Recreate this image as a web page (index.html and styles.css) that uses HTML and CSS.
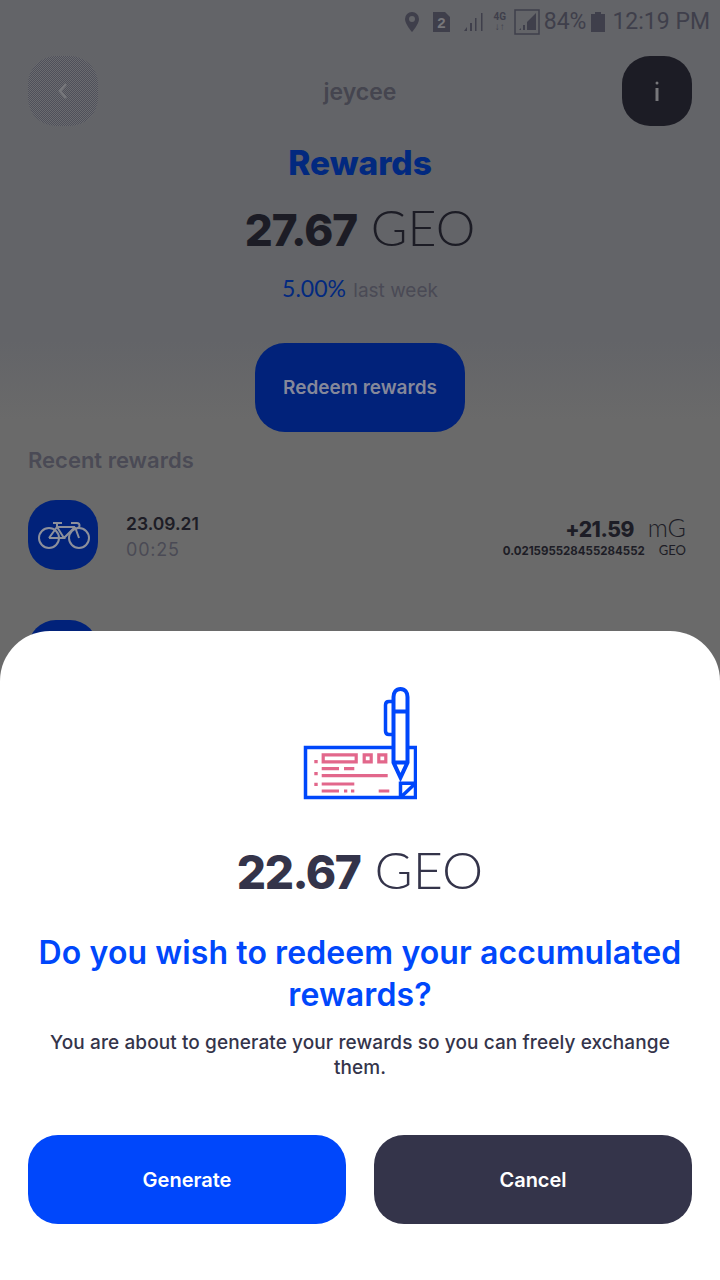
FILE: index.html
```html
<!DOCTYPE html>
<html lang="en">
<head>
    <meta charset="UTF-8">
    <meta name="viewport" content="width=device-width, initial-scale=1.0">
    <title>Rewards</title>
    <link rel="stylesheet" href="styles.css">
</head>
<body>
    <div class="screen">
        <div class="status-bar">
            <svg class="st-pin" width="16" height="22" viewBox="0 0 16 22"><path d="M8 1a7 7 0 0 0-7 7c0 5 7 13 7 13s7-8 7-13a7 7 0 0 0-7-7z" fill="#3f3f4b"/><circle cx="8" cy="8" r="3" fill="#636468"/></svg>
            <svg class="st-sim" width="19" height="22" viewBox="0 0 19 22"><path d="M1 1h12l5 5v15H1z" fill="#3f3f4b"/><text x="9.500" y="17" class="st-sim-num">2</text></svg>
            <svg class="st-bars" width="20" height="22" viewBox="0 0 20 22"><path d="M1 20l3-4v4zM7 20v-8h2v8zM12 20V7h1.500v13zM18 20V2h1.500v18z" fill="#3f3f4b"/></svg>
            <div class="st-4g">4G<span>↓↑</span></div>
            <svg class="st-box" width="26" height="26" viewBox="0 0 26 26"><rect x="1" y="1" width="24" height="24" fill="none" stroke="#3f3f4b" stroke-width="1.500"/><path d="M5 21l2-2v2zM9 21v-5h2v5zM13 21v-8l9-9v17z" fill="#3f3f4b"/></svg>
            <span class="st-text">84%</span>
            <svg class="st-batt" width="14" height="22" viewBox="0 0 14 22"><path d="M4 1h6v2h4v18H0V3h4z" fill="#3f3f4b"/></svg>
            <span class="st-text">12:19 PM</span>
        </div>

        <header class="top-bar">
            <div class="round-btn back-btn">
                <svg width="14" height="20" viewBox="0 0 14 20"><path d="M10 3L4 10l6 7" fill="none" stroke="#76777b" stroke-width="2.500"/></svg>
            </div>
            <div class="user-name">jeycee</div>
            <div class="round-btn info-btn">
                <svg width="6" height="24" viewBox="0 0 6 24"><circle cx="3" cy="4" r="1.500" fill="#77777b"/><rect x="1.500" y="9" width="3" height="13" fill="#77777b"/></svg>
            </div>
        </header>

        <h1 class="page-title">Rewards</h1>
        <div class="balance"><b>27.67</b> GEO</div>
        <div class="weekly"><span class="weekly-pct">5.00%</span> last week</div>
        <div class="redeem-wrap"><div class="redeem-btn">Redeem rewards</div></div>

        <h2 class="recent-title">Recent rewards</h2>
        <div class="reward-row">
            <div class="ride-icon">
                <svg class="bike" width="52" height="30" viewBox="0 0 52 30" fill="none" stroke="#8d909b" stroke-width="2"><circle cx="11" cy="18" r="10"/><circle cx="41" cy="18" r="10"/><path d="M11 18l8-11h18M19 7l7 11H11M37 7l-11 11M37 7l4 11M15 3h9M19 3v4M33 3h6a2 2 0 0 1 0 5"/></svg>
            </div>
            <div class="ride-when">
                <div class="ride-date">23.09.21</div>
                <div class="ride-time">00:25</div>
            </div>
            <div class="ride-amount">
                <div class="amount-main"><b>+21.59</b><span>mG</span></div>
                <div class="amount-sub"><b>0.021595528455284552</b><span>GEO</span></div>
            </div>
        </div>
        <div class="reward-row">
            <div class="ride-icon"></div>
        </div>

        <div class="sheet">
            <svg class="check-icon" width="114" height="113" viewBox="0 0 114 113" fill="none">
                <path d="M106 60.500h6.500v50H2.500v-50H90" stroke="#0047fb" stroke-width="3.500"/>
                <path d="M97.500 110.500V96.200h15M97.500 110.500l15-14.300" stroke="#0047fb" stroke-width="3.500"/>
                <path d="M11.300 73h3.400v3.300h-3.400zM11.300 85h3.400v3.300h-3.400zM11.300 95.700h3.400V99h-3.400z" fill="#e2678b"/>
                <path d="M20.200 67.800h33v7h-33zM61.200 67.800h7v7h-7zM75.800 67.800h7v7h-7z" stroke="#e2678b" stroke-width="3.200"/>
                <path d="M18.700 81.700H36M41 81.700h10.300M18.700 88.700h66M18.700 97h32.600M18.700 104H36M41 104h3.300M48 104h3.300M75.700 104h10.600" stroke="#e2678b" stroke-width="3.200"/>
                <path d="M97.500 2c-4.500 0-7 3.500-7 8v65.500l7 15 7-15V10c0-4.500-2.500-8-7-8zM90.500 24.500h14M90.500 75.500h14" stroke="#0047fb" stroke-width="4" fill="#fff"/>
                <path d="M90 14.500h-4c-2.200 0-3.500 1.300-3.500 3.500v26c0 2.200 1.300 3.500 3.500 3.500h4" stroke="#0047fb" stroke-width="3.500"/>
            </svg>
            <div class="sheet-amount"><b>22.67</b> GEO</div>
            <h3 class="sheet-question">Do you wish to redeem your accumulated rewards?</h3>
            <p class="sheet-text">You are about to generate your rewards so you can freely exchange them.</p>
            <div class="sheet-actions">
                <button class="btn-generate">Generate</button>
                <button class="btn-cancel">Cancel</button>
            </div>
        </div>
    </div>
</body>
</html>
```

FILE: styles.css
```css
* {
    box-sizing: border-box;
}
body {
    margin: 0;
    font-family: Inter, "Liberation Sans", sans-serif;
    background-color: #636468;
}
.screen {
    position: relative;
    width: 720px;
    height: 1280px;
    overflow: hidden;
    background: linear-gradient(#636468 0, #636468 340px, #6a6a6a 420px, #6a6a6a 100%);
    color: #1d1d26;
}
.status-bar {
    height: 40px;
    padding: 3px 10px 0 0;
    display: flex;
    justify-content: flex-end;
    align-items: center;
    color: #3f3f4b;
}
.st-pin {
    margin-right: 12px;
}
.st-sim {
    margin-right: 12px;
}
.st-sim-num {
    font: bold 15px "Liberation Sans", sans-serif;
    fill: #77777b;
    text-anchor: middle;
}
.st-bars {
    margin-right: 9px;
}
.st-4g {
    width: 16px;
    font: bold 10px/10px Roboto, sans-serif;
    text-align: center;
    margin-right: 6px;
}
.st-4g span {
    display: block;
}
.st-box {
    margin-right: 4px;
}
.st-text {
    font: 23px Roboto, sans-serif;
}
.st-batt {
    margin: 0 7px 0 5px;
}
.top-bar {
    display: flex;
    justify-content: space-between;
    align-items: center;
    padding: 16px 28px 0;
}
.round-btn {
    width: 70px;
    height: 70px;
    border-radius: 28px;
    display: flex;
    align-items: center;
    justify-content: center;
}
.back-btn {
    background: repeating-conic-gradient(#4f505a 0 25%, #6b6c70 0 50%) 0 0 / 2px 2px;
}
.info-btn {
    background-color: #1c1c25;
}
.user-name {
    margin-top: 2px;
    font-size: 23px;
    font-weight: 600;
    color: #45454f;
}
.page-title {
    margin: 16px 0 0;
    text-align: center;
    font-size: 33.500px;
    line-height: 42px;
    font-weight: 800;
    color: #02297f;
}
.balance {
    margin-top: 13px;
    height: 60px;
    text-align: center;
    font-family: Lato, sans-serif;
    font-size: 50px;
    line-height: 60px;
    font-weight: 300;
    color: #1c1c25;
}
.balance b, .sheet-amount b, .amount-main b, .amount-sub b {
    font-family: Inter, sans-serif;
    font-weight: 800;
    letter-spacing: -1px;
}
.balance b {
    font-size: 44px;
}
.weekly {
    margin-top: 18px;
    height: 26px;
    text-align: center;
    font-size: 19px;
    line-height: 26px;
    color: #4a4a55;
}
.weekly-pct {
    font-family: Lato, sans-serif;
    font-size: 23px;
    margin-right: 2px;
    color: #02297f;
}
.redeem-wrap {
    margin-top: 42px;
    display: flex;
    justify-content: center;
}
.redeem-btn {
    width: 210px;
    height: 89px;
    border-radius: 30px;
    background-color: #01227a;
    color: #85889a;
    font-size: 19px;
    font-weight: 600;
    display: flex;
    align-items: center;
    justify-content: center;
}
.recent-title {
    margin: 15px 28px 0;
    font-size: 22px;
    line-height: 26px;
    font-weight: 600;
    color: #4a4a55;
}
.reward-row {
    display: flex;
    align-items: center;
    margin: 27px 34px 50px 28px;
    height: 70px;
}
.ride-icon {
    width: 70px;
    height: 70px;
    border-radius: 28px;
    background-color: #01227a;
    display: flex;
    align-items: center;
    justify-content: center;
}
.bike {
    margin-left: 2px;
}
.ride-when {
    margin-left: 28px;
    padding-top: 4px;
}
.ride-date {
    font-size: 17.500px;
    line-height: 26px;
    font-weight: 600;
}
.ride-time {
    font-size: 18px;
    line-height: 26px;
    letter-spacing: 0.800px;
    color: #4a4a55;
}
.ride-amount {
    margin-left: auto;
    text-align: right;
}
.amount-main {
    height: 30px;
    font-family: Lato, sans-serif;
    font-size: 25px;
    line-height: 30px;
}
.amount-main b {
    font-size: 21px;
    letter-spacing: -0.500px;
}
.amount-main span {
    margin-left: 14px;
    font-weight: 300;
}
.amount-sub {
    height: 16px;
    font-family: Lato, sans-serif;
    font-size: 13px;
    line-height: 16px;
}
.amount-sub b {
    font-size: 11.500px;
    font-weight: 700;
    letter-spacing: 0;
}
.amount-sub span {
    margin-left: 14px;
    font-weight: 400;
}
.sheet {
    position: absolute;
    left: 0;
    right: 0;
    top: 631px;
    bottom: 0;
    padding: 56px 28px 0;
    background-color: #fff;
    border-radius: 50px 50px 0 0;
    text-align: center;
    color: #34344a;
}
.check-icon {
    display: block;
    margin: 0 auto;
}
.sheet-amount {
    margin-top: 39px;
    height: 60px;
    font-family: Lato, sans-serif;
    font-size: 52px;
    line-height: 60px;
    font-weight: 300;
}
.sheet-amount b {
    font-size: 46px;
    letter-spacing: -1.500px;
}
.sheet-question {
    margin: 33px 0 0;
    font-size: 32px;
    line-height: 42px;
    font-weight: 600;
    letter-spacing: 0.100px;
    color: #0047fb;
}
.sheet-text {
    margin: 14px 20px 0;
    font-size: 19px;
    line-height: 25px;
    font-weight: 500;
    letter-spacing: 0.100px;
}
.sheet-actions {
    margin-top: 55px;
    display: flex;
    gap: 28px;
}
.sheet-actions button {
    flex: 1;
    height: 89px;
    border: none;
    border-radius: 30px;
    color: #fff;
    font-family: inherit;
    font-size: 20px;
    font-weight: 600;
}
.btn-generate {
    background-color: #0047fb;
}
.btn-cancel {
    background-color: #34344a;
}
```
